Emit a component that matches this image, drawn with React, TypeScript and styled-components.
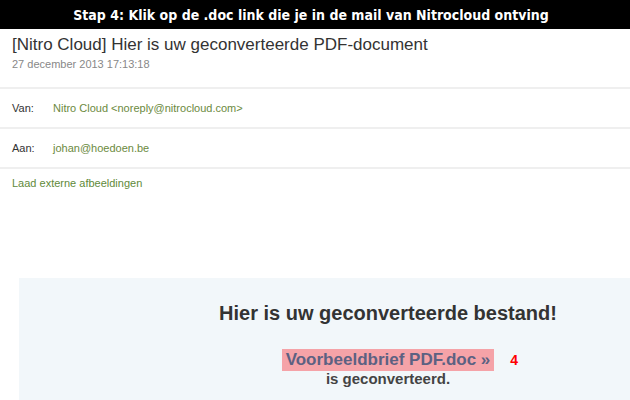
import React from "react";
import styled, { createGlobalStyle } from "styled-components";

const GlobalStyle = createGlobalStyle`
  html, body {
    margin: 0;
    padding: 0;
    background: #fff;
    width: 630px;
    height: 400px;
    overflow: hidden;
  }
  body {
    font-family: "Liberation Sans", Arial, sans-serif;
  }
`;

const Page = styled.div`
  width: 630px;
  height: 400px;
  overflow: hidden;
  display: flex;
  flex-direction: column;
`;

const StepBar = styled.div`
  height: 29px;
  background: #000;
  color: #fff;
  display: flex;
  align-items: center;
  justify-content: center;
  font-family: "DejaVu Sans Condensed", "Liberation Sans", sans-serif;
  font-weight: bold;
  font-size: 14px;
  padding-right: 8px;
`;

const Subject = styled.div`
  padding: 6px 12px 0;
  font-size: 17px;
  color: #333;
  line-height: 20px;
`;

const DateLine = styled.div`
  padding: 3px 12px 0;
  font-size: 11px;
  color: #888;
  height: 29px;
`;

const MetaRow = styled.div`
  display: flex;
  align-items: center;
  height: 38px;
  border-top: 2px solid #efefef;
  padding: 0 12px;
  font-size: 11px;
`;

const Label = styled.span`
  width: 41px;
  color: #333;
`;

const Value = styled.span`
  color: #6b8a3e;
`;

const LoadImages = styled.div`
  border-top: 2px solid #efefef;
  padding: 8px 12px 0;
  font-size: 11px;
  color: #5f8a3a;
  height: 101px;
`;

const Panel = styled.div`
  margin-left: 19px;
  flex: 1;
  background: #f2f7fa;
  padding: 23px 0 0 127px;
  display: flex;
  flex-direction: column;
  align-items: center;
  color: #333;
`;

const Heading = styled.div`
  font-size: 20px;
  font-weight: bold;
  line-height: 24px;
`;

const LinkLine = styled.div`
  margin-top: 24px;
  position: relative;
`;

const DocLink = styled.span`
  display: inline-block;
  background: #f5a3a8;
  color: #5c6182;
  font-weight: bold;
  font-size: 17px;
  line-height: 22px;
  padding: 0 4px;
`;

const Marker = styled.span`
  position: absolute;
  left: calc(100% + 16px);
  top: 3px;
  color: #f00;
  font-weight: bold;
  font-size: 14px;
`;

const Converted = styled.div`
  font-weight: bold;
  font-size: 15px;
  color: #444;
  line-height: 15px;
`;

export default function App() {
  return (
    <Page>
      <GlobalStyle />
      <StepBar>Stap 4: Klik op de .doc link die je in de mail van Nitrocloud ontving</StepBar>
      <Subject>[Nitro Cloud] Hier is uw geconverteerde PDF-document</Subject>
      <DateLine>27 december 2013 17:13:18</DateLine>
      <MetaRow>
        <Label>Van:</Label>
        <Value>Nitro Cloud &lt;noreply@nitrocloud.com&gt;</Value>
      </MetaRow>
      <MetaRow>
        <Label>Aan:</Label>
        <Value>johan@hoedoen.be</Value>
      </MetaRow>
      <LoadImages>Laad externe afbeeldingen</LoadImages>
      <Panel>
        <Heading>Hier is uw geconverteerde bestand!</Heading>
        <LinkLine>
          <DocLink>Voorbeeldbrief PDF.doc »</DocLink>
          <Marker>4</Marker>
        </LinkLine>
        <Converted>is geconverteerd.</Converted>
      </Panel>
    </Page>
  );
}
